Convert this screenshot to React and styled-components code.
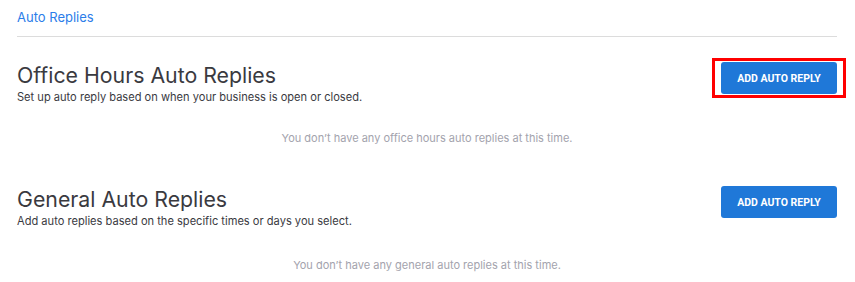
import styled, { createGlobalStyle } from "styled-components";

const GlobalStyle = createGlobalStyle`
  body {
    margin: 0;
    background: #fff;
    font-family: Inter, "Liberation Sans", sans-serif;
  }
`;

const Page = styled.div`
  padding: 0 18px 0 17px;
`;

const Breadcrumb = styled.div`
  height: 36px;
  display: flex;
  align-items: center;
  border-bottom: 1px solid #dcdcdc;
  a {
    color: #2b7de9;
    font-size: 13px;
    text-decoration: none;
    margin-top: -2px;
  }
`;

const Section = styled.section`
  padding-top: ${(props) => props.top}px;
`;

const SectionHead = styled.div`
  display: flex;
  justify-content: space-between;
  align-items: flex-start;
`;

const Title = styled.h2`
  margin: 0;
  font-size: 21.3px;
  font-weight: 400;
  color: #3a3a3f;
  line-height: 27px;
`;

const Subtitle = styled.p`
  margin: 0;
  font-size: 11.1px;
  color: #3a3a3f;
  line-height: 16px;
`;

const ButtonWrap = styled.div`
  position: relative;
  &::after {
    content: "";
    display: ${(props) => (props.highlight ? "block" : "none")};
    position: absolute;
    top: -4px;
    bottom: -4px;
    left: -9px;
    right: -9px;
    border: 3px solid #f00;
    pointer-events: none;
  }
`;

const Button = styled.button`
  width: 116px;
  height: 32px;
  border: none;
  border-radius: 3px;
  background: #1f78d8;
  color: #fff;
  font-family: Roboto, "Liberation Sans", sans-serif;
  font-weight: 700;
  font-size: 10.5px;
  cursor: pointer;
`;

const Empty = styled.p`
  margin: 0;
  text-align: center;
  font-size: 11px;
  color: #a3a3ad;
  padding-top: ${(props) => props.gap}px;
`;

const sections = [
  {
    title: "Office Hours Auto Replies",
    subtitle: "Set up auto reply based on when your business is open or closed.",
    empty: "You don’t have any office hours auto replies at this time.",
    highlight: true,
    top: 25,
    gap: 26,
  },
  {
    title: "General Auto Replies",
    subtitle: "Add auto replies based on the specific times or days you select.",
    empty: "You don’t have any general auto replies at this time.",
    highlight: false,
    top: 41,
    gap: 29,
  },
];

export default function App() {
  return (
    <>
      <GlobalStyle />
      <Page>
        <Breadcrumb>
          <a href="#">Auto Replies</a>
        </Breadcrumb>
        {sections.map((s) => (
          <Section key={s.title} top={s.top}>
            <SectionHead>
              <div>
                <Title>{s.title}</Title>
                <Subtitle>{s.subtitle}</Subtitle>
              </div>
              <ButtonWrap highlight={s.highlight}>
                <Button>ADD AUTO REPLY</Button>
              </ButtonWrap>
            </SectionHead>
            <Empty gap={s.gap}>{s.empty}</Empty>
          </Section>
        ))}
      </Page>
    </>
  );
}
